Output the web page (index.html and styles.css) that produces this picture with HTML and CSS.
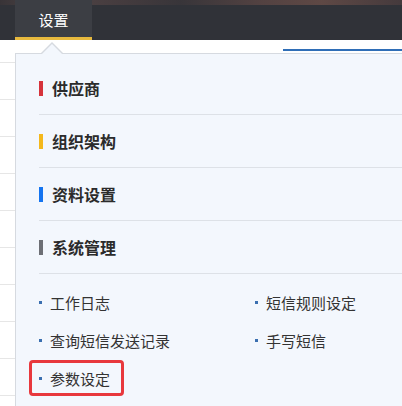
FILE: index.html
```html
<!DOCTYPE html>
<html lang="zh-CN">
<head>
<meta charset="UTF-8">
<meta name="viewport" content="width=device-width, initial-scale=1.0">
<title>设置</title>
<link rel="stylesheet" href="styles.css">
</head>
<body>
    <div class="topbar">
        <div class="banner"></div>
        <div class="tab">设置</div>
    </div>

    <div class="page">
        <div class="page-tabline"></div>

        <div class="dropdown">
            <div class="group">
                <span class="mark red"></span>供应商
            </div>
            <div class="group">
                <span class="mark yellow"></span>组织架构
            </div>
            <div class="group">
                <span class="mark blue"></span>资料设置
            </div>
            <div class="group">
                <span class="mark gray"></span>系统管理
            </div>

            <ul class="items">
                <li>工作日志</li>
                <li>短信规则设定</li>
                <li>查询短信发送记录</li>
                <li>手写短信</li>
                <li class="highlight">参数设定</li>
            </ul>
        </div>
    </div>
</body>
</html>
```

FILE: styles.css
```css
body {
    margin: 0;
    width: 402px;
    height: 406px;
    overflow: hidden;
    background: #fff;
    font-family: "Noto Sans CJK SC", "Noto Sans", sans-serif;
    color: #333;
}

/* top navigation */
.topbar {
    position: relative;
    height: 40px;
    background: #303238;
    padding-left: 15px;
    display: flex;
}
.banner {
    position: absolute;
    left: 0;
    right: 0;
    top: 0;
    height: 5px;
    background: linear-gradient(90deg, #3a3437 0%, #5a4a4a 12%, #4a3e40 30%, #3a363a 45%, #5c4644 65%, #6a4e48 80%, #4a3c3e 100%);
    opacity: 0.8;
}
.tab {
    position: relative;
    width: 77px;
    box-sizing: border-box;
    background: #3c3e44;
    border-bottom: 3px solid #e7b93e;
    color: #fff;
    font-size: 15px;
    line-height: 35px;
    padding-top: 2px;
    text-align: center;
}

/* page behind the menu */
.page {
    position: relative;
    height: 366px;
    background: repeating-linear-gradient(180deg, #fff 0, #fff 23px, #e6e6e6 23px, #e6e6e6 24px, #fff 24px, #fff 37px);
    background-position: 0 -1px;
}
.page-tabline {
    position: absolute;
    left: 283px;
    right: 0;
    top: 9px;
    height: 2px;
    background: #2f6eb7;
}

/* dropdown menu */
.dropdown {
    position: absolute;
    left: 15px;
    right: 0;
    top: 13px;
    bottom: 0;
    background: #f3f7fd;
    border-top: 1px solid #d6dae0;
    border-left: 1px solid #d6dae0;
    padding: 8px 0 0 23px;
}
.dropdown::before {
    content: "";
    position: absolute;
    left: 24px;
    top: -12px;
    width: 0;
    height: 0;
    border-left: 12px solid transparent;
    border-right: 12px solid transparent;
    border-bottom: 12px solid #d6dae0;
}
.dropdown::after {
    content: "";
    position: absolute;
    left: 25px;
    top: -10px;
    width: 0;
    height: 0;
    border-left: 11px solid transparent;
    border-right: 11px solid transparent;
    border-bottom: 11px solid #f3f7fd;
}

.group {
    display: flex;
    align-items: center;
    height: 52px;
    border-bottom: 1px solid #dde1e7;
    font-size: 16px;
    font-weight: bold;
    color: #2b2b2b;
}
.mark {
    width: 4px;
    height: 15px;
    margin-right: 9px;
}
.red { background: #d6333b; }
.yellow { background: #f4b81c; }
.blue { background: #1474f0; }
.gray { background: #6d6f75; }

.items {
    list-style: none;
    margin: 0;
    padding: 9px 0 0 0;
    display: grid;
    grid-template-columns: 216px 1fr;
}
.items li {
    position: relative;
    display: flex;
    align-items: center;
    height: 38px;
    font-size: 15px;
    color: #333;
}
.items li::before {
    content: "";
    width: 3px;
    height: 3px;
    background: #3a6fb0;
    margin-right: 8px;
}
.highlight::after {
    content: "";
    position: absolute;
    left: -10px;
    top: 1px;
    width: 95px;
    height: 36px;
    box-sizing: border-box;
    border: 3px solid #e8383d;
    border-radius: 4px;
}
```
